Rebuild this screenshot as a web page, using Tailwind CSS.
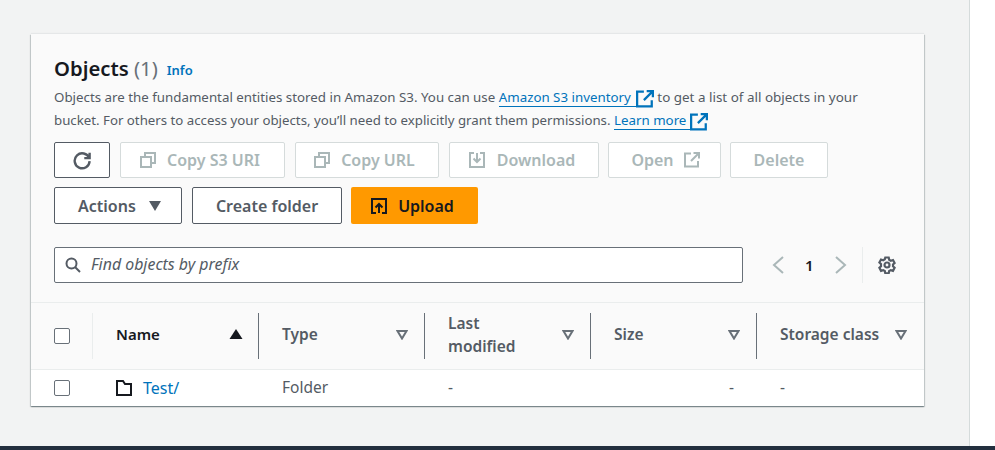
<!DOCTYPE html>
<html><head><meta charset="utf-8"><script src="https://cdn.jsdelivr.net/npm/@tailwindcss/browser@4"></script></head>
<body class="m-0">
<div class="w-[995px] h-[450px] overflow-hidden flex flex-col bg-white font-['Noto_Sans','Open_Sans',sans-serif] text-[#16191f]">
  <div class="flex-1 min-h-0 w-[970px] bg-[#f2f3f3] border-r border-[#d5dbdb] pt-[34px] pl-[31px]">
    <div class="w-[893px] h-[372px] bg-[#fafafa] shadow-[0_1px_1px_0_rgba(0,28,36,0.3),1px_1px_1px_0_rgba(0,28,36,0.15),-1px_1px_1px_0_rgba(0,28,36,0.15),0_-1px_1px_0_rgba(0,28,36,0.05)] flex flex-col">
      <div class="h-[268px] pl-[23px] pt-[20px]">
        <div class="h-[28px] flex items-center">
          <span class="text-[20.3px] font-semibold leading-[28px]">Objects <span class="font-normal text-[#687078]">(1)</span></span>
          <span class="ml-[9px] text-[13px] font-semibold text-[#0073bb] mt-[5px]">Info</span>
        </div>
        <p class="mt-[4px] w-[830px] text-[13.32px] leading-[23px] text-[#545b64] whitespace-nowrap">Objects are the fundamental entities stored in Amazon S3. You can use <a class="text-[#0073bb] inline-flex items-center h-[17px]"><span class="border-b border-[#0073bb] pr-[5px] leading-[17px]">Amazon S3 inventory</span><svg class="w-[18px] h-[18px] mt-[1px]" viewBox="0 0 16 16" fill="none" stroke="#0073bb" stroke-width="2"><path d="M7 1.5H1v13h13V9M9.5 1H15v5.5M15 1 7 9"/></svg></a> <span class="text-[13.45px]">to get a list of all objects in your</span><br><span class="text-[13.25px]">bucket. For others to access your objects, you’ll need to explicitly grant them permissions.</span> <a class="text-[#0073bb] inline-flex items-center h-[17px]"><span class="border-b border-[#0073bb] pr-[4px] leading-[17px]">Learn more</span><svg class="w-[18px] h-[18px] mt-[1px]" viewBox="0 0 16 16" fill="none" stroke="#0073bb" stroke-width="2"><path d="M7 1.5H1v13h13V9M9.5 1H15v5.5M15 1 7 9"/></svg></a></p>
        <div class="mt-[10px] flex h-[36px] text-[16px] font-semibold text-[#aab7b8]">
          <button class="w-[56px] bg-white border border-[#545b64] rounded-[2px] flex items-center justify-center"><svg class="w-[19px] h-[19px]" viewBox="0 0 16 16" fill="none" stroke="#545b64" stroke-width="2"><path d="M13.6 6A6.3 6.3 0 1 0 14 8.5M14 1.5V6H9.5"/></svg></button>
          <button class="ml-[10px] w-[165px] pr-[5px] bg-white border border-[#d5dbdb] rounded-[2px] flex items-center justify-center gap-[11px]"><svg class="w-[16px] h-[16px]" viewBox="0 0 16 16" fill="none" stroke="#aab7b8" stroke-width="2"><path d="M1 5h10v10H1zM5 4V1h10v10h-3"/></svg>Copy S3 URI</button>
          <button class="ml-[10px] w-[144px] pr-[5px] bg-white border border-[#d5dbdb] rounded-[2px] flex items-center justify-center gap-[11px]"><svg class="w-[16px] h-[16px]" viewBox="0 0 16 16" fill="none" stroke="#aab7b8" stroke-width="2"><path d="M1 5h10v10H1zM5 4V1h10v10h-3"/></svg>Copy URL</button>
          <button class="ml-[10px] w-[150px] pr-[4px] bg-white border border-[#d5dbdb] rounded-[2px] flex items-center justify-center gap-[12px]"><svg class="w-[16px] h-[16px]" viewBox="0 0 16 16" fill="none" stroke="#aab7b8" stroke-width="2"><path d="M5 1H1v14h14V1h-4M8 1v9M4.5 6.5 8 10l3.5-3.5"/></svg>Download</button>
          <button class="ml-[9px] w-[113px] pl-[2px] bg-white border border-[#d5dbdb] rounded-[2px] flex items-center justify-center gap-[10px]">Open <svg class="w-[16px] h-[16px]" viewBox="0 0 16 16" fill="none" stroke="#aab7b8" stroke-width="2"><path d="M7 1.5H1v13h13V9M9.5 1H15v5.5M15 1 7 9"/></svg></button>
          <button class="ml-[9px] w-[98px] bg-white border border-[#d5dbdb] rounded-[2px] flex items-center justify-center">Delete</button>
        </div>
        <div class="mt-[9px] flex h-[37px] text-[16px] font-semibold text-[#545b64]">
          <button class="w-[128px] pl-[23px] bg-white border border-[#545b64] rounded-[2px] flex items-center justify-start gap-[12px]">Actions <svg class="w-[14px] h-[10px]" viewBox="0 0 14 10"><path d="M1 0h12L7 10z" fill="#545b64"/></svg></button>
          <button class="ml-[10px] w-[150px] bg-white border border-[#545b64] rounded-[2px] flex items-center justify-center">Create folder</button>
          <button class="ml-[9px] w-[127px] pr-[4px] bg-[#ff9900] rounded-[2px] flex items-center justify-center gap-[11px] text-[#16191f]"><svg class="w-[16px] h-[16px]" viewBox="0 0 16 16" fill="none" stroke="#16191f" stroke-width="2"><path d="M5 15H1V1h14v14h-4M8 15V6M4.5 9.5 8 6l3.5 3.5"/></svg>Upload</button>
        </div>
        <div class="mt-[23px] flex items-center h-[36px]">
          <div class="w-[689px] h-[36px] bg-white border border-[#687078] rounded-[2px] flex items-center pl-[10px] gap-[10px]">
            <svg class="w-[16px] h-[16px] shrink-0" viewBox="0 0 16 16" fill="none" stroke="#545b64" stroke-width="2"><circle cx="6.5" cy="6.5" r="5"/><path d="m10 10 5 5"/></svg>
            <span class="text-[15.9px] italic text-[#545b64]">Find objects by prefix</span>
          </div>
          <svg class="ml-[29px] w-[12px] h-[18px]" viewBox="0 0 12 18" fill="none" stroke="#aab7b8" stroke-width="2"><path d="M11 1 2 9l9 8"/></svg>
          <span class="ml-[21px] w-[10px] text-[15px] font-semibold">1</span>
          <svg class="ml-[20px] w-[12px] h-[18px]" viewBox="0 0 12 18" fill="none" stroke="#aab7b8" stroke-width="2"><path d="m1 1 9 8-9 8"/></svg>
          <div class="ml-[15px] w-px h-[36px] bg-[#eaeded]"></div>
          <svg class="ml-[15px] w-[18px] h-[18px]" viewBox="0 0 18 18" fill="none" stroke="#545b64" stroke-width="2.2"><circle cx="9" cy="9" r="2.5"/><path d="M7.3 1.5h3.4l.5 2.3 1.6.9 2.2-.7 1.6 3-1.6 1.5v1.8l1.6 1.5-1.6 3-2.2-.7-1.6.9-.5 2.3H7.3l-.5-2.3-1.6-.9-2.2.7-1.6-3 1.6-1.5V8L1.4 6.5l1.6-3 2.2.7 1.6-.9z"/></svg>
        </div>
      </div>
      <div class="h-[68px] border-y border-[#eaeded] grid grid-cols-[61px_166px_166px_166px_166px_168px] grid-rows-[66px] text-[15.5px] font-semibold text-[#545b64]">
        <div class="flex items-center pl-[23px]"><span class="w-[16px] h-[16px] bg-white border border-[#687078] rounded-[2px]"></span></div>
        <div class="my-[10px] pb-[4px] border-l border-[#eaeded] flex items-center justify-between pl-[23px] pr-[15px] text-[#16191f] text-[15px]">Name<svg class="w-[14px] h-[10px]" viewBox="0 0 14 10"><path d="M7 0l6.5 10H.5z" fill="#16191f"/></svg></div>
        <div class="my-[10px] pb-[2px] border-l border-[#687078] flex items-center justify-between pl-[23px] pr-[16px]">Type<svg class="w-[12px] h-[10px]" viewBox="0 0 12 10" fill="none" stroke="#687078" stroke-width="2"><path d="M1.5 1h9L6 8.5z"/></svg></div>
        <div class="my-[10px] pb-[2px] border-l border-[#687078] flex items-center justify-between pl-[23px] pr-[16px] leading-[23px]"><span>Last<br>modified</span><svg class="w-[12px] h-[10px]" viewBox="0 0 12 10" fill="none" stroke="#687078" stroke-width="2"><path d="M1.5 1h9L6 8.5z"/></svg></div>
        <div class="my-[10px] pb-[2px] border-l border-[#687078] flex items-center justify-between pl-[23px] pr-[16px]">Size<svg class="w-[12px] h-[10px]" viewBox="0 0 12 10" fill="none" stroke="#687078" stroke-width="2"><path d="M1.5 1h9L6 8.5z"/></svg></div>
        <div class="my-[10px] pb-[2px] border-l border-[#687078] flex items-center justify-between pl-[23px] pr-[17px] whitespace-nowrap">Storage class<svg class="w-[12px] h-[10px]" viewBox="0 0 12 10" fill="none" stroke="#687078" stroke-width="2"><path d="M1.5 1h9L6 8.5z"/></svg></div>
      </div>
      <div class="flex-1 bg-white grid grid-cols-[61px_166px_166px_166px_166px_168px] items-center text-[15.5px] text-[#545b64]">
        <div class="pl-[23px] flex"><span class="w-[16px] h-[16px] bg-white border border-[#687078] rounded-[2px]"></span></div>
        <div class="pl-[24px] flex items-center gap-[11px] text-[#0073bb] text-[16px]"><svg class="w-[16px] h-[16px]" viewBox="0 0 16 16" fill="none" stroke="#16191f" stroke-width="2"><path d="M1 15V1h6l2 3h6v11z"/></svg>Test/</div>
        <div class="pl-[24px]">Folder</div>
        <div class="pl-[24px]">-</div>
        <div class="text-right pr-[22px]">-</div>
        <div class="pl-[24px]">-</div>
      </div>
    </div>
  </div>
  <div class="h-[4px] shrink-0 bg-[#232f3e]"></div>
</div>
</body></html>
